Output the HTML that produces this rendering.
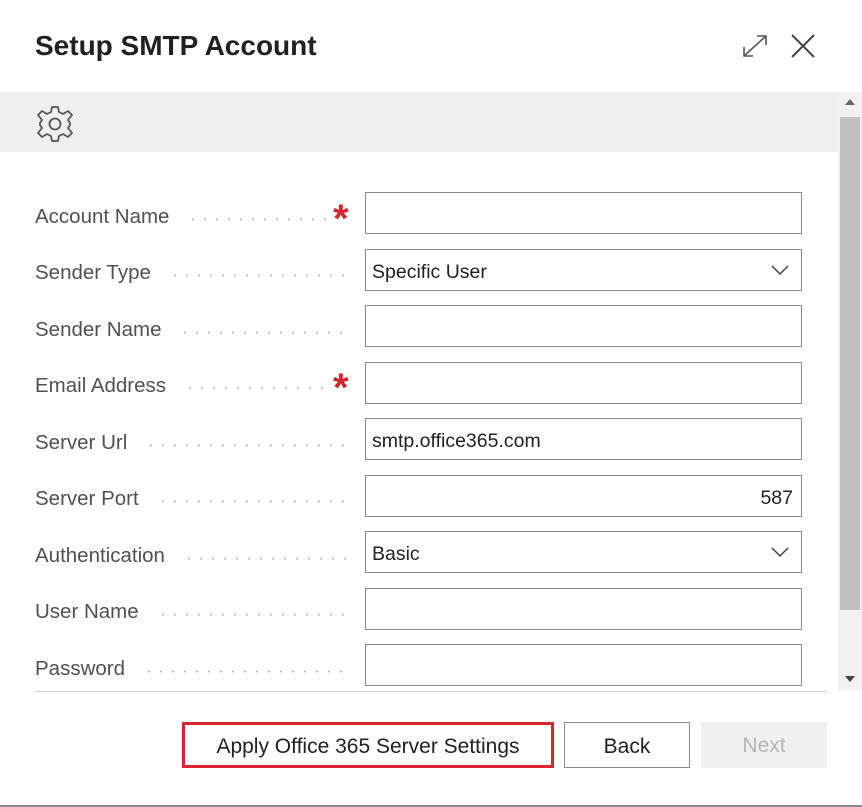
<!DOCTYPE html>
<html><head><style>
body{margin:0;width:862px;height:807px;background:#fff;font-family:"Liberation Sans",sans-serif;position:relative;overflow:hidden;color:#212121}
.a{position:absolute}
.lbl{position:absolute;left:35px;font-size:20.5px;color:#505050;width:316px;display:flex;align-items:center;height:42px}
.lbl span.d{flex:1;margin-left:18px;height:3px;margin-top:4px;background-image:radial-gradient(circle,#bdbdbd 1px,transparent 1.3px);background-size:12px 3px;background-repeat:repeat-x}
.in{position:absolute;left:365px;width:435px;height:40px;border:1px solid #8a8a8a;font-size:19.5px;line-height:44px;box-sizing:content-box;padding:0}
.in span{margin-left:6px}
.star{position:absolute;left:333px;color:#d0282e;font-size:40px;font-weight:bold;line-height:40px}
.btn{position:absolute;top:722px;height:46px;border:1px solid #8a8a8a;font-size:21px;text-align:center;line-height:48px;box-sizing:border-box}
</style></head><body>
<div class="a" style="left:35px;top:30px;font-size:28px;font-weight:bold;color:#212121">Setup SMTP Account</div>
<svg class="a" style="left:740px;top:32px" width="30" height="28" viewBox="0 0 30 28"><path d="M4 24 L26 4 M17 4 H26 V13 M4 15 V24 H13" fill="none" stroke="#555" stroke-width="1.6"/></svg>
<svg class="a" style="left:789px;top:32px" width="28" height="28" viewBox="0 0 28 28"><path d="M3 3 L25 25 M25 3 L3 25" stroke="#444" stroke-width="2" fill="none"/></svg>
<div class="a" style="left:0;top:92px;width:838px;height:60px;background:#eeeeee"></div>
<svg class="a" style="left:35px;top:104px" width="40" height="40" viewBox="-20 -20 40 40"><path d="M-3 -17 H3 L4 -12 L8 -10 L13 -13 L17 -9 L13 -4 L15 -1 V1 L13 4 L17 9 L13 13 L8 10 L4 12 L3 17 H-3 L-4 12 L-8 10 L-13 13 L-17 9 L-13 4 L-15 1 V-1 L-13 -4 L-17 -9 L-13 -13 L-8 -10 L-4 -12 Z" fill="none" stroke="#555" stroke-width="1.8" stroke-linejoin="round"/><circle r="5.5" fill="none" stroke="#555" stroke-width="1.8"/></svg>
<div class="a" style="left:838px;top:92px;width:24px;height:598px;background:#f1f1f1"></div>
<div class="a" style="left:840px;top:117px;width:20px;height:493px;background:#c1c1c1"></div>
<div class="a" style="left:845px;top:99px;width:0;height:0;border-left:5px solid transparent;border-right:5px solid transparent;border-bottom:6px solid #666"></div>
<div class="a" style="left:845px;top:676px;width:0;height:0;border-left:5px solid transparent;border-right:5px solid transparent;border-top:6px solid #444"></div>

<div class="lbl" style="top:196px">Account Name<span class="d"></span><span style="width:20px"></span></div><div class="star" style="top:199px">*</div><div class="in" style="top:192px"></div>
<div class="lbl" style="top:252px">Sender Type<span class="d"></span></div><div class="in" style="top:249px"><span>Specific User</span><svg style="position:absolute;right:12px;top:15px" width="18" height="10"><path d="M1 1 L9 9 L17 1" fill="none" stroke="#444" stroke-width="1.5"/></svg></div>
<div class="lbl" style="top:309px">Sender Name<span class="d"></span></div><div class="in" style="top:305px"></div>
<div class="lbl" style="top:365px">Email Address<span class="d"></span><span style="width:20px"></span></div><div class="star" style="top:368px">*</div><div class="in" style="top:362px"></div>
<div class="lbl" style="top:422px">Server Url<span class="d"></span></div><div class="in" style="top:418px"><span>smtp.office365.com</span></div>
<div class="lbl" style="top:478px">Server Port<span class="d"></span></div><div class="in" style="top:475px;text-align:right"><span style="margin-right:8px">587</span></div>
<div class="lbl" style="top:535px">Authentication<span class="d"></span></div><div class="in" style="top:531px"><span>Basic</span><svg style="position:absolute;right:12px;top:15px" width="18" height="10"><path d="M1 1 L9 9 L17 1" fill="none" stroke="#444" stroke-width="1.5"/></svg></div>
<div class="lbl" style="top:591px">User Name<span class="d"></span></div><div class="in" style="top:588px"></div>
<div class="lbl" style="top:648px">Password<span class="d"></span></div><div class="in" style="top:644px"></div>
<div class="a" style="left:35px;top:691px;width:792px;height:1px;background:#ccc"></div>

<div class="btn" style="left:182px;width:372px;border:3px solid #d9242f;line-height:44px">Apply Office 365 Server Settings</div>
<div class="btn" style="left:564px;width:126px">Back</div>
<div class="btn" style="left:701px;width:126px;border:none;background:#f0f0f0;color:#b5b5b5">Next</div>
<div class="a" style="left:0;top:805px;width:862px;height:2px;background:#888"></div>
</body></html>
